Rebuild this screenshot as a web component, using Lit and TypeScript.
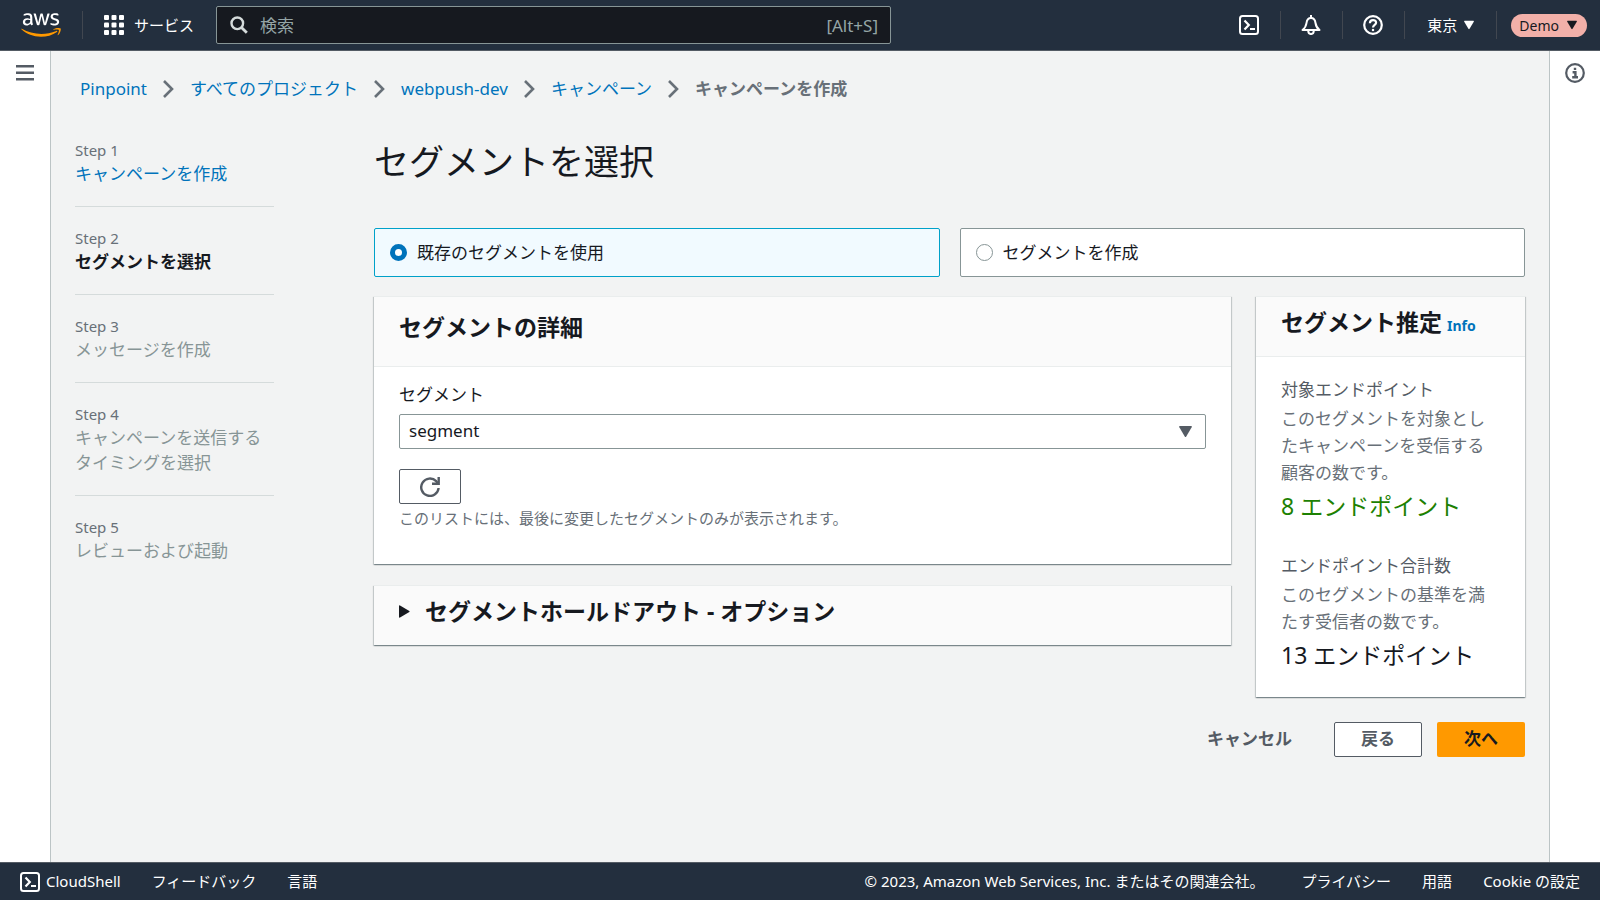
import { LitElement, html, css, svg } from "lit";
import { customElement, state } from "lit/decorators.js";
import { classMap } from "lit/directives/class-map.js";

interface Step {
  title: string;
  status: "done" | "current" | "todo";
}

const STEPS: Step[] = [
  { title: "キャンペーンを作成", status: "done" },
  { title: "セグメントを選択", status: "current" },
  { title: "メッセージを作成", status: "todo" },
  { title: "キャンペーンを送信するタイミングを選択", status: "todo" },
  { title: "レビューおよび起動", status: "todo" },
];

const CRUMBS = ["Pinpoint", "すべてのプロジェクト", "webpush-dev", "キャンペーン"];

const OPTIONS = [
  { value: "existing", label: "既存のセグメントを使用" },
  { value: "create", label: "セグメントを作成" },
];

const ESTIMATES = [
  {
    title: "対象エンドポイント",
    text: "このセグメントを対象としたキャンペーンを受信する顧客の数です。",
    count: "8 エンドポイント",
    good: true,
  },
  {
    title: "エンドポイント合計数",
    text: "このセグメントの基準を満たす受信者の数です。",
    count: "13 エンドポイント",
    good: false,
  },
];

const awsLogo = html`<svg width="40" height="26" viewBox="0 0 304 182" aria-hidden="true">
  <path
    fill="#fff"
    d="M86.4 66.4c0 3.7.4 6.7 1.1 8.9.8 2.200 1.800 4.600 3.200 7.200.5.800.7 1.600.7 2.300 0 1-.6 2-1.900 3l-6.300 4.200c-.9.600-1.800.900-2.600.900-1 0-2-.5-3-1.400-1.400-1.500-2.600-3.100-3.600-4.700-1-1.700-2-3.600-3.100-5.900-7.800 9.200-17.600 13.800-29.400 13.800-8.400 0-15.100-2.400-20-7.200-4.900-4.800-7.400-11.200-7.400-19.200 0-8.500 3-15.400 9.100-20.600 6.100-5.200 14.200-7.800 24.500-7.800 3.400 0 6.900.3 10.600.8 3.700.5 7.500 1.300 11.500 2.200v-7.300c0-7.600-1.600-12.900-4.700-16-3.200-3.100-8.600-4.600-16.300-4.600-3.500 0-7.100.4-10.800 1.300-3.700.9-7.300 2-10.800 3.400-1.600.7-2.800 1.100-3.500 1.300-.7.200-1.200.3-1.600.3-1.400 0-2.100-1-2.100-3.100v-4.900c0-1.600.2-2.800.7-3.500.5-.7 1.400-1.400 2.800-2.100 3.500-1.800 7.700-3.300 12.600-4.500 4.900-1.300 10.100-1.900 15.600-1.900 11.900 0 20.600 2.700 26.200 8.100 5.500 5.400 8.300 13.600 8.300 24.600v32.400zM45.800 81.600c3.300 0 6.700-.6 10.300-1.800 3.600-1.200 6.800-3.400 9.500-6.400 1.600-1.900 2.800-4 3.400-6.400.6-2.400 1-5.300 1-8.700v-4.200c-2.900-.7-6-1.300-9.200-1.700-3.200-.4-6.300-.6-9.400-.6-6.700 0-11.600 1.300-14.900 4-3.300 2.700-4.900 6.500-4.900 11.500 0 4.700 1.200 8.200 3.700 10.600 2.400 2.500 5.900 3.700 10.500 3.700zm80.300 10.800c-1.800 0-3-.3-3.800-1-.8-.6-1.500-2-2.100-3.900L96.700 10.200c-.6-2-.9-3.300-.9-4 0-1.600.8-2.500 2.400-2.500h9.800c1.900 0 3.200.3 3.900 1 .8.600 1.400 2 2 3.900l16.800 66.200 15.600-66.200c.5-2 1.100-3.300 1.900-3.900.8-.6 2.200-1 4-1h8c1.900 0 3.200.3 4 1 .8.600 1.500 2 1.900 3.900l15.800 67 17.300-67c.6-2 1.300-3.300 2-3.900.8-.6 2.100-1 3.900-1h9.300c1.600 0 2.500.8 2.500 2.500 0 .5-.1 1-.2 1.600-.1.600-.3 1.400-.7 2.500l-24.100 77.300c-.6 2-1.300 3.300-2.100 3.900-.8.600-2.100 1-3.800 1h-8.600c-1.900 0-3.200-.3-4-1-.8-.7-1.500-2-1.900-4L156 23l-15.400 64.400c-.5 2-1.100 3.300-1.900 4-.8.700-2.200 1-4 1h-8.600zm128.500 2.700c-5.200 0-10.400-.6-15.400-1.800-5-1.200-8.900-2.500-11.500-4-1.600-.9-2.700-1.900-3.100-2.800-.4-.9-.6-1.900-.6-2.800v-5.100c0-2.100.8-3.100 2.300-3.100.6 0 1.200.1 1.800.3.600.2 1.500.6 2.500 1 3.400 1.500 7.100 2.700 11 3.500 4 .8 7.900 1.200 11.900 1.200 6.300 0 11.200-1.100 14.600-3.300 3.400-2.200 5.200-5.400 5.200-9.500 0-2.800-.9-5.100-2.700-7-1.800-1.900-5.200-3.600-10.100-5.200L246 52c-7.300-2.300-12.700-5.700-16-10.200-3.300-4.400-5-9.300-5-14.500 0-4.200.9-7.900 2.700-11.100 1.800-3.200 4.200-6 7.200-8.200 3-2.300 6.400-4 10.400-5.200 4-1.200 8.200-1.700 12.600-1.700 2.200 0 4.500.1 6.700.4 2.300.3 4.400.7 6.500 1.100 2 .5 3.900 1 5.700 1.600 1.800.6 3.200 1.200 4.200 1.800 1.400.8 2.400 1.600 3 2.500.6.800.9 1.900.9 3.300v4.700c0 2.100-.8 3.200-2.300 3.200-.8 0-2.100-.4-3.800-1.200-5.700-2.600-12.100-3.900-19.200-3.900-5.700 0-10.200.9-13.300 2.800-3.100 1.900-4.700 4.800-4.700 8.900 0 2.800 1 5.200 3 7.100 2 1.900 5.700 3.800 11 5.500l14.200 4.500c7.200 2.300 12.400 5.500 15.500 9.600 3.100 4.100 4.600 8.800 4.600 14 0 4.300-.9 8.200-2.600 11.600-1.800 3.400-4.200 6.400-7.300 8.800-3.100 2.500-6.800 4.300-11.100 5.600-4.500 1.400-9.200 2.100-14.300 2.100z"
  />
  <path
    fill="#f90"
    d="M273.500 143.700c-32.900 24.300-80.700 37.200-121.800 37.200-57.600 0-109.500-21.300-148.700-56.700-3.100-2.800-.3-6.600 3.400-4.400 42.400 24.600 94.700 39.500 148.800 39.500 36.500 0 76.600-7.600 113.500-23.200 5.500-2.500 10.200 3.600 4.800 7.600z"
  />
  <path
    fill="#f90"
    d="M287.200 128.100c-4.200-5.400-27.800-2.600-38.500-1.300-3.200.4-3.700-2.400-.8-4.500 18.800-13.200 49.700-9.400 53.300-5 3.600 4.500-1 35.400-18.600 50.200-2.700 2.300-5.300 1.100-4.100-1.900 4-9.900 12.900-32.200 8.700-37.500z"
  />
</svg>`;

const gridIcon = html`<svg width="20" height="20" viewBox="0 0 20 20" fill="currentColor" aria-hidden="true">
  ${[0, 7.5, 15].map((y) => [0, 7.5, 15].map((x) => svg`<rect x=${x} y=${y} width="5" height="5" rx="1" />`))}
</svg>`;

const searchIcon = html`<svg width="18" height="18" viewBox="0 0 18 18" fill="none" stroke="currentColor" aria-hidden="true">
  <circle cx="7.300" cy="7.300" r="5.800" stroke-width="2.400" />
  <path d="M11.500 11.500L16.800 16.800" stroke-width="2.800" />
</svg>`;

const shellIcon = html`<svg width="20" height="20" viewBox="0 0 20 20" fill="none" stroke="currentColor" stroke-width="2" aria-hidden="true">
  <rect x="1" y="1" width="18" height="18" rx="2.500" />
  <path d="M5.500 5.500L9.800 10L5.500 14.500" stroke-width="2.200" />
  <path d="M11 14H16" />
</svg>`;

const bellIcon = html`<svg width="20" height="20" viewBox="0 0 20 20" fill="none" stroke="currentColor" stroke-width="2" stroke-linejoin="round" aria-hidden="true">
  <path d="M10 0V3" />
  <path d="M1.500 15H18.500C15.800 13 15 11.500 14.500 8C14.100 4.800 12.600 3 10 3S5.900 4.800 5.500 8C5 11.500 4.200 13 1.500 15Z" />
  <path d="M7.200 15.500C7.200 20.200 12.800 20.200 12.800 15.500" />
</svg>`;

const helpIcon = html`<svg width="20" height="20" viewBox="0 0 20 20" fill="none" stroke="currentColor" stroke-width="2.200" aria-hidden="true">
  <circle cx="10" cy="10" r="8.800" />
  <path d="M6.900 8.200C6.900 4 13.100 4.200 13.100 7.700C13.100 10 10 9.900 10 12.600" />
  <path d="M10 13.900V16.100" />
</svg>`;

const infoIcon = html`<svg width="20" height="20" viewBox="0 0 20 20" fill="none" stroke="currentColor" stroke-width="2.200" aria-hidden="true">
  <circle cx="10" cy="10" r="8.800" />
  <path d="M10 4.700V7.100M7.600 9.200H10.400V14M7.200 14.200H13" stroke-width="2.400" />
</svg>`;

const menuIcon = html`<svg width="18" height="16" viewBox="0 0 18 16" fill="currentColor" aria-hidden="true">
  <path d="M0 0H18V2.500H0ZM0 6.500H18V9H0ZM0 13H18V15.500H0Z" />
</svg>`;

const chevronIcon = html`<svg width="11" height="18" viewBox="0 0 11 18" fill="none" stroke="currentColor" stroke-width="2.600" aria-hidden="true">
  <path d="M1 1L9 9L1 17" />
</svg>`;

const refreshIcon = html`<svg width="20" height="20" viewBox="0 0 20 20" fill="none" stroke="currentColor" stroke-width="2.400" aria-hidden="true">
  <path d="M18.600 11A8.700 8.700 0 1 1 16.200 4.200L18 6.300" />
  <path d="M18.700 0V6.800H12" />
</svg>`;

const caret = (size: number) => html`<svg width=${size} height=${size} viewBox="0 0 12 12" fill="currentColor" aria-hidden="true">
  <path d="M.6 1H11.400Q12.200 1 11.700 2L6.700 10.500Q6 11.500 5.300 10.500L.3 2Q-.2 1 .6 1Z" />
</svg>`;

const rightCaret = html`<svg width="11" height="13" viewBox="0 0 11 13" fill="currentColor" aria-hidden="true">
  <path d="M0 1Q0 0 1 .4L10.300 5.900Q11 6.500 10.300 7.100L1 12.600Q0 13 0 12Z" />
</svg>`;

@customElement("app-root")
export class AppRoot extends LitElement {
  @state() private choice = "existing";

  static styles = css`
    :host {
      display: flex;
      flex-direction: column;
      min-height: 100vh;
      background: #f2f3f3;
      color: #16191f;
      font-family: "Noto Sans", "Noto Sans CJK JP", sans-serif;
      font-size: 17px;
      line-height: 25px;
    }
    * {
      box-sizing: border-box;
    }
    svg {
      display: block;
      flex: none;
    }
    a {
      color: #0073bb;
      text-decoration: none;
    }
    button,
    input,
    select {
      font: inherit;
      color: inherit;
      margin: 0;
    }
    button {
      padding: 0;
      border: 0;
      background: none;
      cursor: pointer;
    }
    h1,
    h2,
    p,
    ol,
    dl,
    dd {
      margin: 0;
      padding: 0;
    }
    ol {
      list-style: none;
    }

    .topbar {
      display: flex;
      align-items: center;
      height: 51px;
      padding: 0 13px 0 21px;
      border-bottom: 1px solid #545b64;
      background: #232f3e;
      color: #fff;
      font-size: 15px;
    }
    .divider {
      width: 1px;
      height: 28px;
      background: #414750;
    }
    .logo {
      padding-right: 21px;
    }
    .services {
      display: flex;
      align-items: center;
      gap: 10px;
      padding: 0 22px 0 21px;
    }
    .search {
      display: flex;
      align-items: center;
      flex: 0 1 675px;
      gap: 12px;
      height: 38px;
      padding: 0 12px 0 13px;
      border: 1px solid #879596;
      border-radius: 2px;
      background: #16191f;
      color: #d5dbdb;
      font-size: 17px;
    }
    .search-input {
      flex: 1;
      min-width: 0;
      padding: 0;
      border: 0;
      outline: 0;
      background: none;
    }
    .search-input::placeholder {
      color: #95a5a6;
      opacity: 1;
    }
    .shortcut {
      color: #95a5a6;
    }
    .tools {
      display: flex;
      align-items: center;
      margin-left: auto;
    }
    .tool {
      padding: 0 21px 0 20px;
    }
    .region {
      display: flex;
      align-items: center;
      gap: 7px;
      padding: 0 22px;
    }
    .account {
      display: flex;
      align-items: center;
      gap: 8px;
      height: 23px;
      margin-left: 14px;
      padding: 0 10px 0 8px;
      border-radius: 12px;
      background: #f2b0a9;
      color: #16191f;
      font-size: 14px;
    }

    .body {
      display: flex;
      flex: 1;
    }
    .rail {
      flex: none;
      width: 51px;
      background: #fff;
      color: #545b64;
    }
    .rail-button {
      display: block;
    }
    .rail-left {
      padding: 14px 16px;
      border-right: 1px solid #bcc4c5;
    }
    .rail-right {
      padding: 12px 15px;
      border-left: 1px solid #bcc4c5;
    }
    .page {
      flex: 1;
      min-width: 0;
      padding: 25px 24px;
    }
    .crumbs {
      display: flex;
      align-items: center;
      gap: 16px;
      padding-left: 5px;
      color: #687078;
    }
    .crumb-now {
      font-weight: 700;
    }
    .wizard {
      display: grid;
      grid-template-columns: 199px minmax(0, 1fr);
      gap: 100px;
      margin-top: 38px;
    }
    .step {
      padding-bottom: 20px;
    }
    .step + .step {
      padding-top: 20px;
      border-top: 1px solid #d5dbdb;
    }
    .step-no {
      font-size: 15px;
      line-height: 22px;
      color: #687078;
    }
    .todo {
      color: #879596;
    }
    .current {
      font-weight: 700;
    }

    h1 {
      font-size: 35px;
      font-weight: 400;
      line-height: 46px;
    }
    .options {
      display: grid;
      grid-template-columns: 1fr 1fr;
      gap: 20px;
      margin: 43px 0 19px;
    }
    .option {
      display: flex;
      align-items: center;
      gap: 10px;
      height: 49px;
      padding: 0 15px;
      border: 1px solid #879596;
      border-radius: 2px;
      background: #fff;
    }
    .option.on {
      border-color: #00a1c9;
      background: #f1faff;
    }
    .radio {
      appearance: none;
      flex: none;
      width: 17px;
      height: 17px;
      border: 1px solid #879596;
      border-radius: 50%;
      background: #fff;
    }
    .radio:checked {
      border: 5px solid #0073bb;
    }

    .columns {
      display: grid;
      grid-template-columns: minmax(0, 1fr) 269px;
      align-items: start;
      gap: 25px;
    }
    .stack {
      display: grid;
      gap: 21px;
    }
    .card {
      border-top: 1px solid #eaeded;
      background: #fff;
      box-shadow:
        0 1px 1px 0 rgba(0, 28, 36, 0.3),
        1px 1px 1px 0 rgba(0, 28, 36, 0.15),
        -1px 1px 1px 0 rgba(0, 28, 36, 0.15);
    }
    .card-head {
      padding: 15px 25px 24px;
      border-bottom: 1px solid #eaeded;
      background: #fafafa;
    }
    h2 {
      font-size: 23px;
      font-weight: 700;
      line-height: 30px;
    }
    .card-body {
      padding: 15px 25px 35px;
    }
    .label {
      display: block;
      margin-bottom: 7px;
    }
    .picker {
      display: grid;
      align-items: center;
      margin-bottom: 20px;
    }
    .select {
      grid-area: 1 / 1;
      appearance: none;
      width: 100%;
      height: 35px;
      padding: 0 9px 2px;
      border: 1px solid #879596;
      border-radius: 2px;
      background: #fff;
    }
    .picker-caret {
      grid-area: 1 / 1;
      justify-self: end;
      margin-right: 14px;
      color: #545b64;
      pointer-events: none;
    }
    .refresh {
      display: grid;
      place-items: center;
      width: 62px;
      height: 35px;
      border: 1px solid #545b64;
      border-radius: 2px;
      color: #545b64;
    }
    .hint {
      margin-top: 3px;
      font-size: 15px;
      line-height: 22px;
      color: #687078;
    }
    .expander {
      display: flex;
      align-items: center;
      gap: 15px;
      width: 100%;
      padding: 10px 25px 19px;
      background: #fafafa;
      text-align: left;
    }

    .side-head {
      display: flex;
      align-items: baseline;
      gap: 5px;
      padding: 10px 25px 18px;
      border-bottom: 1px solid #eaeded;
      background: #fafafa;
    }
    .info {
      font-size: 14px;
      font-weight: 700;
    }
    .side-body {
      display: grid;
      gap: 30px;
      padding: 20px 25px 25px;
    }
    dt {
      line-height: 26px;
      color: #545b64;
    }
    .about {
      margin: 2px 0 3px;
      line-height: 27px;
      color: #687078;
    }
    .count {
      font-size: 23px;
      line-height: 34px;
    }
    .good {
      color: #1d8102;
    }

    .actions {
      display: flex;
      justify-content: flex-end;
      gap: 15px;
      margin-top: 25px;
    }
    .btn {
      height: 35px;
      padding: 0 26px 2px;
      border: 1px solid transparent;
      border-radius: 2px;
      color: #545b64;
      font-weight: 700;
    }
    .btn-normal {
      border-color: #545b64;
      background: #fff;
    }
    .btn-primary {
      background: #f90;
      color: #16191f;
    }

    .footer {
      display: flex;
      align-items: center;
      gap: 31px;
      height: 38px;
      padding: 0 20px;
      border-top: 1px solid #545b64;
      background: #232f3e;
      color: #fff;
      font-size: 15px;
    }
    .footer a {
      color: inherit;
    }
    .shell {
      display: flex;
      align-items: center;
      gap: 6px;
    }
    .legal {
      margin-left: auto;
      padding-right: 6px;
    }
  `;

  private topbar() {
    return html`<header class="topbar">
      <a class="logo" href="#" aria-label="AWS">${awsLogo}</a>
      <span class="divider"></span>
      <button class="services">${gridIcon}<span>サービス</span></button>
      <div class="search">
        ${searchIcon}
        <input class="search-input" type="search" placeholder="検索" aria-label="検索" />
        <span class="shortcut">[Alt+S]</span>
      </div>
      <div class="tools">
        <button class="tool" aria-label="CloudShell">${shellIcon}</button>
        <span class="divider"></span>
        <button class="tool" aria-label="通知">${bellIcon}</button>
        <span class="divider"></span>
        <button class="tool" aria-label="ヘルプ">${helpIcon}</button>
        <span class="divider"></span>
        <button class="region">東京 ${caret(10)}</button>
        <span class="divider"></span>
        <button class="account">Demo ${caret(10)}</button>
      </div>
    </header>`;
  }

  private stepList() {
    return html`<nav aria-label="ステップ">
      <ol>
        ${STEPS.map(
          (s, i) => html`<li class="step">
            <div class="step-no">Step ${i + 1}</div>
            ${s.status === "done"
              ? html`<a href="#">${s.title}</a>`
              : html`<div class=${s.status}>${s.title}</div>`}
          </li>`,
        )}
      </ol>
    </nav>`;
  }

  private sourceTiles() {
    return html`<div class="options" role="radiogroup" aria-label="セグメント">
      ${OPTIONS.map(
        (o) => html`<label class=${classMap({ option: true, on: this.choice === o.value })}>
          <input
            class="radio"
            type="radio"
            name="source"
            .value=${o.value}
            .checked=${this.choice === o.value}
            @change=${() => (this.choice = o.value)}
          />
          <span>${o.label}</span>
        </label>`,
      )}
    </div>`;
  }

  private details() {
    return html`<div class="stack">
      <section class="card">
        <div class="card-head"><h2>セグメントの詳細</h2></div>
        <div class="card-body">
          <label class="label" for="segment">セグメント</label>
          <div class="picker">
            <select class="select" id="segment">
              <option>segment</option>
            </select>
            <span class="picker-caret">${caret(13)}</span>
          </div>
          <button class="refresh" aria-label="更新">${refreshIcon}</button>
          <p class="hint">このリストには、最後に変更したセグメントのみが表示されます。</p>
        </div>
      </section>
      <section class="card">
        <button class="expander" aria-expanded="false">
          ${rightCaret}
          <h2>セグメントホールドアウト - オプション</h2>
        </button>
      </section>
    </div>`;
  }

  private estimate() {
    return html`<aside class="card">
      <div class="side-head">
        <h2>セグメント推定</h2>
        <a class="info" href="#">Info</a>
      </div>
      <div class="side-body">
        ${ESTIMATES.map(
          (e) => html`<dl>
            <dt>${e.title}</dt>
            <dd class="about">${e.text}</dd>
            <dd class=${classMap({ count: true, good: e.good })}>${e.count}</dd>
          </dl>`,
        )}
      </div>
    </aside>`;
  }

  render() {
    return html`
      ${this.topbar()}
      <div class="body" lang="ja">
        <div class="rail rail-left">
          <button class="rail-button" aria-label="メニュー">${menuIcon}</button>
        </div>
        <main class="page">
          <nav class="crumbs" aria-label="パンくずリスト">
            ${CRUMBS.map((c) => html`<a href="#">${c}</a>${chevronIcon}`)}
            <span class="crumb-now">キャンペーンを作成</span>
          </nav>
          <div class="wizard">
            ${this.stepList()}
            <div>
              <h1>セグメントを選択</h1>
              ${this.sourceTiles()}
              <div class="columns">${this.details()} ${this.estimate()}</div>
              <div class="actions">
                <button class="btn">キャンセル</button>
                <button class="btn btn-normal">戻る</button>
                <button class="btn btn-primary">次へ</button>
              </div>
            </div>
          </div>
        </main>
        <div class="rail rail-right">
          <button class="rail-button" aria-label="情報">${infoIcon}</button>
        </div>
      </div>
      <footer class="footer">
        <a class="shell" href="#">${shellIcon}<span>CloudShell</span></a>
        <a href="#">フィードバック</a>
        <a href="#">言語</a>
        <span class="legal">© 2023, Amazon Web Services, Inc. またはその関連会社。</span>
        <a href="#">プライバシー</a>
        <a href="#">用語</a>
        <a href="#">Cookie の設定</a>
      </footer>
    `;
  }
}
